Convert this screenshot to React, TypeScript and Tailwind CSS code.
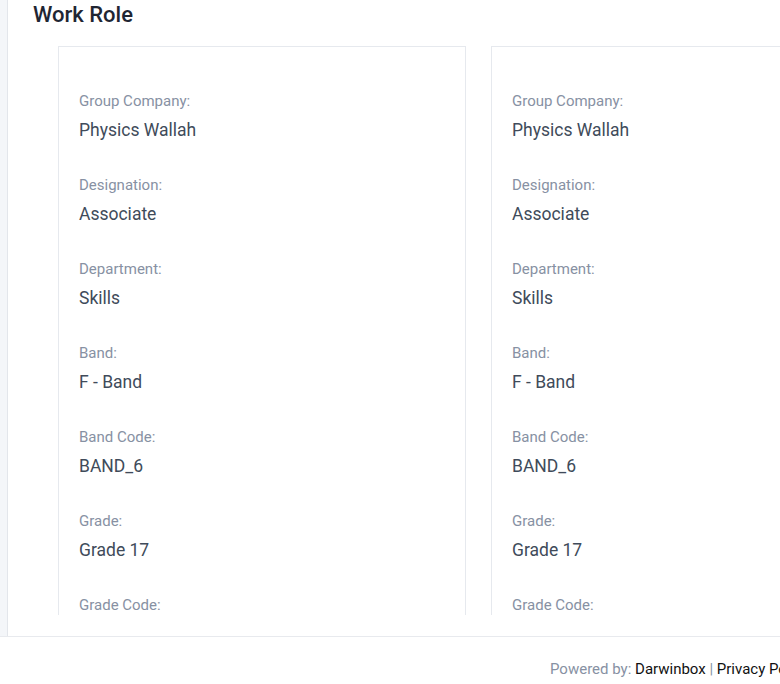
const fields = [
  { label: "Group Company:", value: "Physics Wallah" },
  { label: "Designation:", value: "Associate" },
  { label: "Department:", value: "Skills" },
  { label: "Band:", value: "F - Band" },
  { label: "Band Code:", value: "BAND_6" },
  { label: "Grade:", value: "Grade 17" },
  { label: "Grade Code:", value: "" },
];

function RoleCard() {
  return (
    <div className="w-[408px] shrink-0 border border-[#e6e9ee] border-b-0 bg-white pl-[20px] pt-[44px]">
      {fields.map((f) => (
        <div key={f.label} className="mb-[33px]">
          <p className="text-[15px] leading-[20px] text-[#8791a3]">{f.label}</p>
          <p className="mt-[7px] text-[17.5px] leading-[24px] text-[#404b5a]">{f.value || "\u00a0"}</p>
        </div>
      ))}
    </div>
  );
}

export default function App() {
  return (
    <div className="w-[780px] h-[684px] overflow-hidden bg-white font-['Roboto',sans-serif]">
      <div className="flex h-[637px] border-b border-[#e8eaee]">
        <div className="w-[8px] shrink-0 bg-[#f4f6f9] border-r border-[#e3e6eb]" />
        <div className="flex-1 min-w-0 pl-[25px]">
          <h2 className="text-[22px] leading-[30px] font-medium text-[#1f2633]">Work Role</h2>
          <div className="mt-[16px] flex gap-[25px] pl-[25px] h-[569px] overflow-hidden">
            <RoleCard />
            <RoleCard />
          </div>
        </div>
      </div>
      <div className="h-[47px] pt-[21px] pl-[550px] whitespace-nowrap text-[15px] leading-[22px]">
        <span className="text-[#8791a3]">Powered by: </span>
        <span className="text-[#111111]">Darwinbox</span>
        <span className="text-[#8791a3]"> | </span>
        <span className="text-[#111111]">Privacy Policy</span>
      </div>
    </div>
  );
}
